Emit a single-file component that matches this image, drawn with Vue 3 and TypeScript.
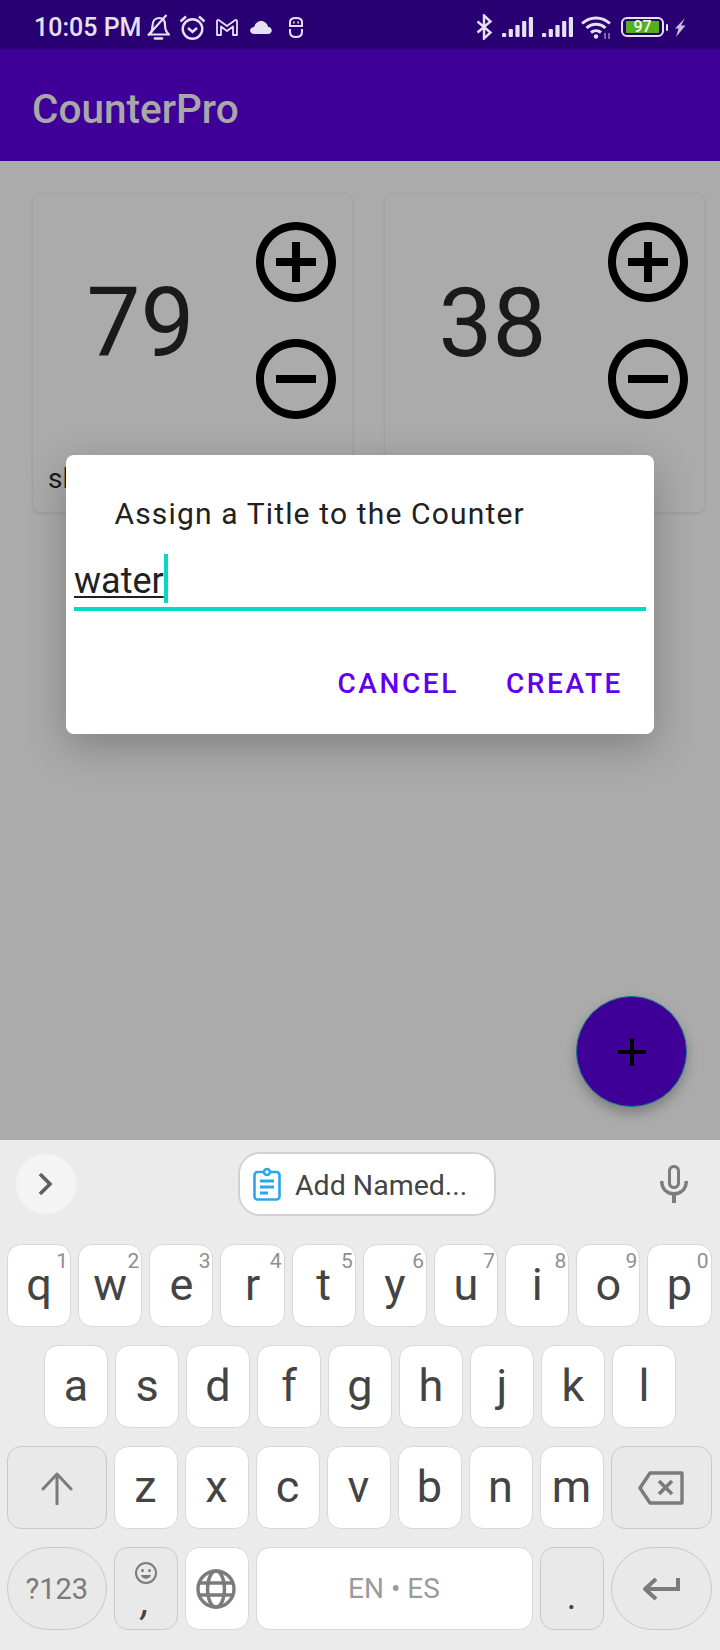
<script setup lang="ts">
const row1 = [
  { k: 'q', n: '1' }, { k: 'w', n: '2' }, { k: 'e', n: '3' }, { k: 'r', n: '4' }, { k: 't', n: '5' },
  { k: 'y', n: '6' }, { k: 'u', n: '7' }, { k: 'i', n: '8' }, { k: 'o', n: '9' }, { k: 'p', n: '0' },
]
const row2 = ['a', 's', 'd', 'f', 'g', 'h', 'j', 'k', 'l']
const row3 = ['z', 'x', 'c', 'v', 'b', 'n', 'm']
const counters = [
  { value: 79, title: 'sleep' },
  { value: 38, title: '' },
]
const bars = [4, 8, 12, 16, 20]
</script>

<template>
  <div class="phone">
    <header class="statusbar">
      <span class="time">10:05 PM</span>
      <svg class="ic-bell" width="23" height="26" viewBox="0 0 23 26" fill="none" stroke="currentColor" stroke-width="2.200">
        <path d="M3 20.500c2-2.500 2.500-5 2.500-8.500 0-5 2.500-8 6.500-8s6 3 6 7c0 4 .8 7 4 9.500z" stroke-linejoin="round" />
        <path d="M1 21.500 19.500 1" />
        <path d="M8 24.500h7" stroke-width="2.600" stroke-linecap="round" />
      </svg>
      <svg class="ic-alarm" width="27" height="25" viewBox="0 0 27 25" fill="none" stroke="currentColor" stroke-width="2.400">
        <circle cx="13.500" cy="14" r="9.800" />
        <path d="M9 13l4.500 4 4.500-4" />
        <path d="M1.500 6.500l5.500-5M25.500 6.500l-5.500-5" />
      </svg>
      <svg class="ic-mail" width="22" height="17" viewBox="0 0 22 17" fill="none" stroke="currentColor" stroke-width="1.800" stroke-linejoin="round">
        <path d="M1 16V2c0-1 1-1.300 2-.7l8 5.700 8-5.700c1-.6 2-.3 2 .7v14h-4V7.500l-6 4.500-6-4.500V16z" />
      </svg>
      <svg class="ic-cloud" width="22" height="13" viewBox="0 0 22 13" fill="currentColor">
        <path d="M4.500 13c-5.500 0-6-6.500-.5-7C5 2.500 8 0 11 0c3.500 0 6.500 2.500 7 5.800 5 .5 5 7.200 0 7.200z" />
      </svg>
      <svg class="ic-robot" width="16" height="22" viewBox="0 0 16 22" fill="none" stroke="currentColor" stroke-width="2">
        <path d="M2 10V6c0-2.500 2-4 6-4s6 1.500 6 4v4z" />
        <path d="M2 13v3c0 3 2 5 6 5s6-2 6-5v-3" />
        <path d="M5 6.500h1.600M9.400 6.500H11" />
      </svg>
      <div class="status-right">
        <svg width="17" height="26" viewBox="0 0 17 26" fill="none" stroke="currentColor" stroke-width="2.400">
          <path d="M1.500 7.500 14.500 18.500 8 24.500V1.500l6.500 6L1.500 18.500" />
        </svg>
        <svg v-for="s in 2" :key="s" class="signal" width="31" height="20" viewBox="0 0 31 20" fill="currentColor">
          <rect v-for="(h, i) in bars" :key="i" :x="i * 6.700" :y="20 - h" width="4.200" :height="h" rx="1" />
        </svg>
        <svg class="wifi" width="30" height="23" viewBox="0 0 30 23" fill="none" stroke="currentColor" stroke-width="3">
          <path d="M1 7.500c8-7.500 20-7.500 28 0" />
          <path d="M5.500 12c5.500-5 13.500-5 19 0" />
          <path d="M10 16.500c3-2.500 7-2.500 10 0" />
          <circle cx="15" cy="20.500" r="2.200" fill="currentColor" stroke="none" />
          <path d="M24 17v6M28 17v6" stroke-width="1.500" opacity=".6" />
        </svg>
        <div class="battery"><span class="battery-fill">97</span></div>
        <span class="nub" />
        <svg class="bolt" width="12" height="19" viewBox="0 0 12 19" fill="currentColor">
          <path d="M11 0 1 10.500h3.500L2 19l9.500-11.500H7z" />
        </svg>
      </div>
    </header>

    <div class="appbar">CounterPro</div>

    <main class="content">
      <section v-for="c in counters" :key="c.value" class="card">
        <div class="card-main">
          <div class="value">{{ c.value }}</div>
          <div class="buttons">
            <svg width="80" height="80" viewBox="2 2 20 20">
              <path d="M13 7h-2v4H7v2h4v4h2v-4h4v-2h-4V7zm-1-5C6.480 2 2 6.480 2 12s4.480 10 10 10 10-4.480 10-10S17.520 2 12 2zm0 18c-4.410 0-8-3.590-8-8s3.590-8 8-8 8 3.590 8 8-3.590 8-8 8z" />
            </svg>
            <svg width="80" height="80" viewBox="2 2 20 20">
              <path d="M7 11v2h10v-2H7zm5-9C6.480 2 2 6.480 2 12s4.480 10 10 10 10-4.480 10-10S17.520 2 12 2zm0 18c-4.410 0-8-3.590-8-8s3.590-8 8-8 8 3.590 8 8-3.590 8-8 8z" />
            </svg>
          </div>
        </div>
        <div class="card-title">{{ c.title }}</div>
      </section>
    </main>

    <div class="fab">
      <svg width="28" height="28" viewBox="0 0 28 28"><path d="M12 0h4v12h12v4H16v12h-4V16H0v-4h12z" /></svg>
    </div>

    <div class="dialog">
      <div class="dialog-title">Assign a Title to the Counter</div>
      <div class="field">
        <span class="field-text">water</span><span class="caret" />
      </div>
      <div class="actions">
        <span>CANCEL</span>
        <span>CREATE</span>
      </div>
    </div>

    <div class="keyboard">
      <div class="toolbar">
        <div class="chev">
          <svg width="16" height="26" viewBox="0 0 16 26" fill="none" stroke="#5f5f5f" stroke-width="3.600">
            <path d="M2 3l10 10L2 23" />
          </svg>
        </div>
        <div class="chip">
          <svg width="28" height="34" viewBox="0 0 28 34" fill="none" stroke="#2ba6ec" stroke-width="2.600">
            <rect x="1.500" y="5" width="25" height="27.500" rx="3" />
            <circle cx="14" cy="5" r="3" fill="#fff" />
            <path d="M7 14h14M7 20h14M7 26h8" stroke-width="2.800" />
          </svg>
          <span class="chip-text">Add Named...</span>
        </div>
        <svg class="mic" width="30" height="38" viewBox="0 0 30 38" fill="#7c7c7c">
          <path d="M15 0c3.500 0 6 2.500 6 6v12c0 3.500-2.500 6-6 6s-6-2.500-6-6V6c0-3.500 2.500-6 6-6zm0 3c-1.800 0-3 1.200-3 3v12c0 1.800 1.200 3 3 3s3-1.200 3-3V6c0-1.800-1.200-3-3-3z" />
          <path d="M1 16h3.500c0 7 4 11 10.500 11s10.500-4 10.500-11H29c0 8-5 13.500-12 14.500V38h-4v-7.500C6 29.500 1 24 1 16z" />
        </svg>
      </div>

      <div class="rows">
        <div class="row row-top">
          <div v-for="key in row1" :key="key.k" class="key">
            <span class="hint">{{ key.n }}</span>{{ key.k }}
          </div>
        </div>
        <div class="row row-home">
          <div v-for="key in row2" :key="key" class="key">{{ key }}</div>
        </div>
        <div class="row">
          <div class="key func shift">
            <svg width="32" height="34" viewBox="0 0 32 34" fill="none" stroke="#7b7b7b" stroke-width="3" stroke-linecap="round" stroke-linejoin="round">
              <path d="M16 33V3M2 18 16 3l14 15" />
            </svg>
          </div>
          <div v-for="key in row3" :key="key" class="key">{{ key }}</div>
          <div class="key func wide">
            <svg width="46" height="34" viewBox="0 0 46 34" fill="none" stroke="#7b7b7b" stroke-width="3.400" stroke-linejoin="round">
              <path d="M12 2h32v30H12L2 17z" />
              <path d="M21 10l13 13M34 10 21 23" stroke-width="3.600" />
            </svg>
          </div>
        </div>
        <div class="row">
          <div class="key func shift pill sym">?123</div>
          <div class="key func comma">
            <svg width="22" height="22" viewBox="0 0 22 22" fill="none" stroke="#7b7b7b" stroke-width="2">
              <circle cx="11" cy="11" r="10" />
              <circle cx="7.500" cy="8.500" r="1.500" fill="#7b7b7b" stroke="none" />
              <circle cx="14.500" cy="8.500" r="1.500" fill="#7b7b7b" stroke="none" />
              <path d="M6 13h10c-1 5-9 5-10 0z" fill="#7b7b7b" stroke="none" />
            </svg>
            <span>,</span>
          </div>
          <div class="key globe">
            <svg width="40" height="40" viewBox="0 0 40 40" fill="none" stroke="#7b7b7b" stroke-width="3.400">
              <circle cx="20" cy="20" r="18" />
              <ellipse cx="20" cy="20" rx="8.500" ry="18" />
              <path d="M3 14h34M3 26h34" />
            </svg>
          </div>
          <div class="key space">EN • ES</div>
          <div class="key func period">.</div>
          <div class="key func wide pill">
            <svg width="38" height="24" viewBox="0 0 38 24" fill="none" stroke="#7b7b7b" stroke-width="4">
              <path d="M36 1v11H5" />
              <path d="M14 2 3 12l11 10" stroke-linejoin="round" />
            </svg>
          </div>
        </div>
      </div>
    </div>
  </div>
</template>

<style>
html,
body {
  margin: 0;
  background: #ababab;
}
</style>

<style scoped>
.phone {
  position: relative;
  width: 720px;
  height: 1650px;
  overflow: hidden;
  background: #ababab;
  font-family: Roboto, "Liberation Sans", sans-serif;
}

.statusbar {
  display: flex;
  align-items: center;
  height: 49px;
  padding: 5px 34px 0 34px;
  box-sizing: border-box;
  background: #290072;
  color: #e6e1f1;
}

.time {
  font-size: 25px;
  font-weight: 500;
  margin-right: 6px;
}

.ic-alarm {
  margin-left: 9px;
}

.ic-mail {
  margin-left: 10px;
}

.ic-cloud {
  margin-left: 12px;
}

.ic-robot {
  margin-left: 16px;
}

.status-right {
  display: flex;
  align-items: center;
  margin-left: auto;
}

.signal {
  margin-left: 9px;
}

.wifi {
  margin-left: 8px;
}

.battery {
  width: 43px;
  height: 20px;
  margin-left: 10px;
  box-sizing: border-box;
  border: 2px solid #e6e1f1;
  border-radius: 6px;
  padding: 2px 3px;
  display: flex;
}

.battery-fill {
  flex: 1;
  background: #55b01f;
  border-radius: 1px;
  color: #f3f7ee;
  font-size: 16px;
  font-weight: 500;
  line-height: 12px;
  text-align: center;
}

.nub {
  width: 2px;
  height: 7px;
  margin-left: 2px;
  background: #e6e1f1;
  border-radius: 1px;
}

.bolt {
  margin-left: 6px;
  opacity: 0.85;
}

.appbar {
  height: 112px;
  padding-left: 32px;
  background: #3f0097;
  color: #a8a8a8;
  font-size: 40.500px;
  font-weight: 500;
  line-height: 120px;
}

.content {
  display: grid;
  grid-template-columns: 321px 321px;
  gap: 31px;
  padding: 32px 15px 0 32px;
}

.card {
  height: 320px;
  box-sizing: border-box;
  border: 1px solid #a2a2a2;
  border-radius: 8px;
  background: #ababab;
  box-shadow: 0 1px 2px rgba(0, 0, 0, 0.08);
}

.card-main {
  display: flex;
  padding: 28px 16px 0 0;
}

.value {
  flex: 1;
  align-self: center;
  text-align: center;
  font-size: 96px;
  font-weight: 400;
  color: #1a1a1a;
  line-height: 112px;
  margin: 4px 8px 0 0;
}

.buttons {
  display: flex;
  flex-direction: column;
  gap: 37px;
}

.buttons svg {
  display: block;
}

.card-title {
  margin: 43px 0 0 15px;
  font-size: 28px;
  color: #1a1a1a;
}

.fab {
  position: absolute;
  left: 576px;
  top: 996px;
  width: 111px;
  height: 111px;
  box-sizing: border-box;
  border: 1px solid #0f7c8c;
  border-radius: 50%;
  background: #3f0097;
  display: flex;
  align-items: center;
  justify-content: center;
  box-shadow: 0 6px 12px rgba(0, 0, 0, 0.25);
}

.dialog {
  position: absolute;
  left: 66px;
  top: 455px;
  width: 588px;
  height: 279px;
  box-sizing: border-box;
  padding: 0 8px;
  background: #fff;
  border-radius: 8px;
  box-shadow: 0 12px 40px rgba(0, 0, 0, 0.25);
}

.dialog-title {
  padding: 41px 0 0 40.500px;
  font-size: 30px;
  line-height: 36px;
  letter-spacing: 1.150px;
  color: #212121;
}

.field {
  display: flex;
  align-items: flex-start;
  height: 53px;
  margin-top: 22px;
  border-bottom: 4px solid #03dac5;
}

.field-text {
  font-size: 36px;
  line-height: 42px;
  margin-top: 6px;
  color: #212121;
  text-decoration: underline;
  text-underline-offset: 3px;
  text-decoration-thickness: 2px;
}

.caret {
  width: 4px;
  height: 49px;
  background: #03dac5;
}

.actions {
  display: flex;
  justify-content: flex-end;
  gap: 47px;
  padding: 56px 23px 0 0;
  color: #6200ee;
  font-size: 28px;
  font-weight: 500;
  letter-spacing: 2.600px;
}

.keyboard {
  position: absolute;
  left: 0;
  right: 0;
  top: 1140px;
  height: 510px;
  background: #ebebeb;
}

.toolbar {
  display: flex;
  align-items: center;
  height: 76px;
  padding: 12px 31px 0 16px;
  box-sizing: border-box;
}

.chev {
  display: flex;
  align-items: center;
  justify-content: center;
  width: 60px;
  height: 60px;
  border-radius: 50%;
  background: #f4f4f4;
}

.chip {
  display: flex;
  align-items: center;
  gap: 14px;
  width: 258px;
  height: 64px;
  margin-left: 162px;
  padding-left: 13px;
  box-sizing: border-box;
  border: 2px solid #d2d2d2;
  border-radius: 22px;
  background: #fff;
  color: #444;
  font-size: 28.500px;
}

.chip-text {
  padding-top: 3px;
}

.mic {
  margin-left: auto;
}

.rows {
  display: flex;
  flex-direction: column;
  gap: 18px;
  padding: 28px 7px 0;
}

.row {
  display: flex;
  gap: 7px;
  height: 83px;
}

.row-top {
  padding-right: 1.500px;
}

.row-top .key {
  flex: 1;
}

.row-home {
  padding-left: 37px;
}

.key {
  position: relative;
  flex: 0 0 64px;
  display: flex;
  align-items: center;
  justify-content: center;
  box-sizing: border-box;
  border: 1px solid #d8d8d8;
  border-radius: 14px;
  background: #fff;
  color: #444;
  font-size: 45px;
  font-weight: 380;
  padding-bottom: 2px;
}

.hint {
  position: absolute;
  top: 4px;
  right: 2px;
  font-size: 21px;
  color: #8f8f8f;
}

.func {
  background: #e9e9e9;
  border-color: #c9c9c9;
  padding-bottom: 0;
}

.shift {
  flex: 0 0 99.500px;
}

.wide {
  flex: 0 0 101.500px;
}

.pill {
  border-radius: 42px;
}

.sym {
  font-size: 29px;
  font-weight: 400;
  color: #7b7b7b;
}

.comma {
  flex-direction: column;
  gap: 4px;
  font-size: 40px;
  line-height: 30px;
  font-style: italic;
}

.comma span {
  margin-top: -2px;
}

.globe {
  padding: 0 2px 0 0;
}

.space {
  flex: 0 0 277px;
  font-size: 28px;
  color: #9b9b9b;
  padding-bottom: 0;
}

.period {
  font-size: 36px;
  padding: 16px 0 0;
}
</style>
